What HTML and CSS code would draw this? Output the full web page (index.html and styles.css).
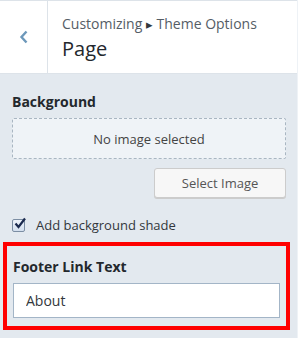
FILE: index.html
```html
<!DOCTYPE html>
<html lang="en">
<head>
    <meta charset="UTF-8">
    <title>Page - Theme Options</title>
    <link rel="stylesheet" href="styles.css">
</head>
<body>

    <!-- Section header -->
    <div class="section-header">
        <button class="back-btn" aria-label="Back">
            <svg width="10" height="14" viewBox="0 0 10 14"><path d="M7.5 1.5 L2.5 7 L7.5 12.5" fill="none" stroke="#6d98ba" stroke-width="2.4"/></svg>
        </button>
        <div class="header-title">
            <span class="crumbs">Customizing <span class="arrow">&#9656;</span> Theme Options</span>
            <h1>Page</h1>
        </div>
    </div>

    <!-- Controls -->
    <div class="controls">
        <div class="control">
            <span class="control-title">Background</span>
            <div class="placeholder">No image selected</div>
            <div class="actions">
                <button class="btn">Select Image</button>
            </div>
        </div>

        <label class="check">
            <span class="check-box">
                <svg width="14" height="14" viewBox="0 0 14 14"><path d="M2.5 6.5 L5.5 10 L12 1.5" fill="none" stroke="#1b2a4e" stroke-width="2.2"/></svg>
            </span>
            Add background shade
        </label>

        <div class="control highlight">
            <label class="control-title" for="footerLink">Footer Link Text</label>
            <input type="text" id="footerLink" value="About">
        </div>
    </div>

</body>
</html>
```
FILE: styles.css
```css
* {
    margin: 0;
    padding: 0;
    box-sizing: border-box;
}

body {
    font-family: "Open Sans", "Noto Sans", sans-serif;
    font-size: 13px;
    color: #32373c;
    background: #e3e9ef;
    width: 298px;
    height: 338px;
    overflow: hidden;
    border-right: 1px solid #eef2f6;
}

/* Header */
.section-header {
    display: flex;
    height: 74px;
    background: #fff;
    border-top: 1px solid #dde3e9;
    border-bottom: 1px solid #dde3e9;
}

.back-btn {
    width: 48px;
    border: none;
    border-right: 1px solid #dde3e9;
    background: #fff;
    display: flex;
    align-items: center;
    justify-content: center;
}

.header-title {
    padding: 13px 0 0 14px;
}

.crumbs {
    display: block;
    font-size: 14px;
    line-height: 20px;
    color: #555d66;
}

.crumbs .arrow {
    font-size: 13px;
    color: #32373c;
}

h1 {
    font-size: 20px;
    font-weight: normal;
    line-height: 30px;
    color: #23282d;
}

/* Controls */
.controls {
    padding: 18px 11px 0 12px;
}

.control-title {
    display: block;
    font-size: 14px;
    font-weight: bold;
    line-height: 20px;
    color: #23282d;
    margin-bottom: 6px;
}

.placeholder {
    height: 41px;
    border: 1px dashed #a9b6c2;
    border-radius: 2px;
    background: #eff3f7;
    display: flex;
    align-items: center;
    justify-content: center;
    color: #444;
}

.actions {
    display: flex;
    justify-content: flex-end;
    margin-top: 9px;
}

.btn {
    font-family: inherit;
    font-size: 13px;
    color: #555;
    height: 30px;
    width: 132px;
    background: #f7f7f7;
    border: 1px solid #ccc;
    border-radius: 3px;
    box-shadow: 0 1px 0 #ccc;
}

.check {
    display: flex;
    align-items: center;
    gap: 11px;
    margin-top: 18px;
    color: #32373c;
}

.check-box {
    position: relative;
    width: 13px;
    height: 13px;
    border: 1px solid #7c8ea3;
    border-radius: 2px;
    background: linear-gradient(#eef3fa, #d3dfee);
}

.check-box svg {
    position: absolute;
    left: 0;
    top: -3px;
}

/* annotated control */
.highlight {
    margin: 8px -4px 0 -9px;
    padding: 11px 6px 8px 6px;
    border: 4px solid #ff0000;
}

.highlight .control-title {
    margin-bottom: 6px;
}

.highlight input {
    width: 100%;
    height: 35px;
    border: 1px solid #a3b5c7;
    background: #fff;
    font-family: inherit;
    font-size: 14px;
    color: #32373c;
    padding: 0 12px;
}
```
